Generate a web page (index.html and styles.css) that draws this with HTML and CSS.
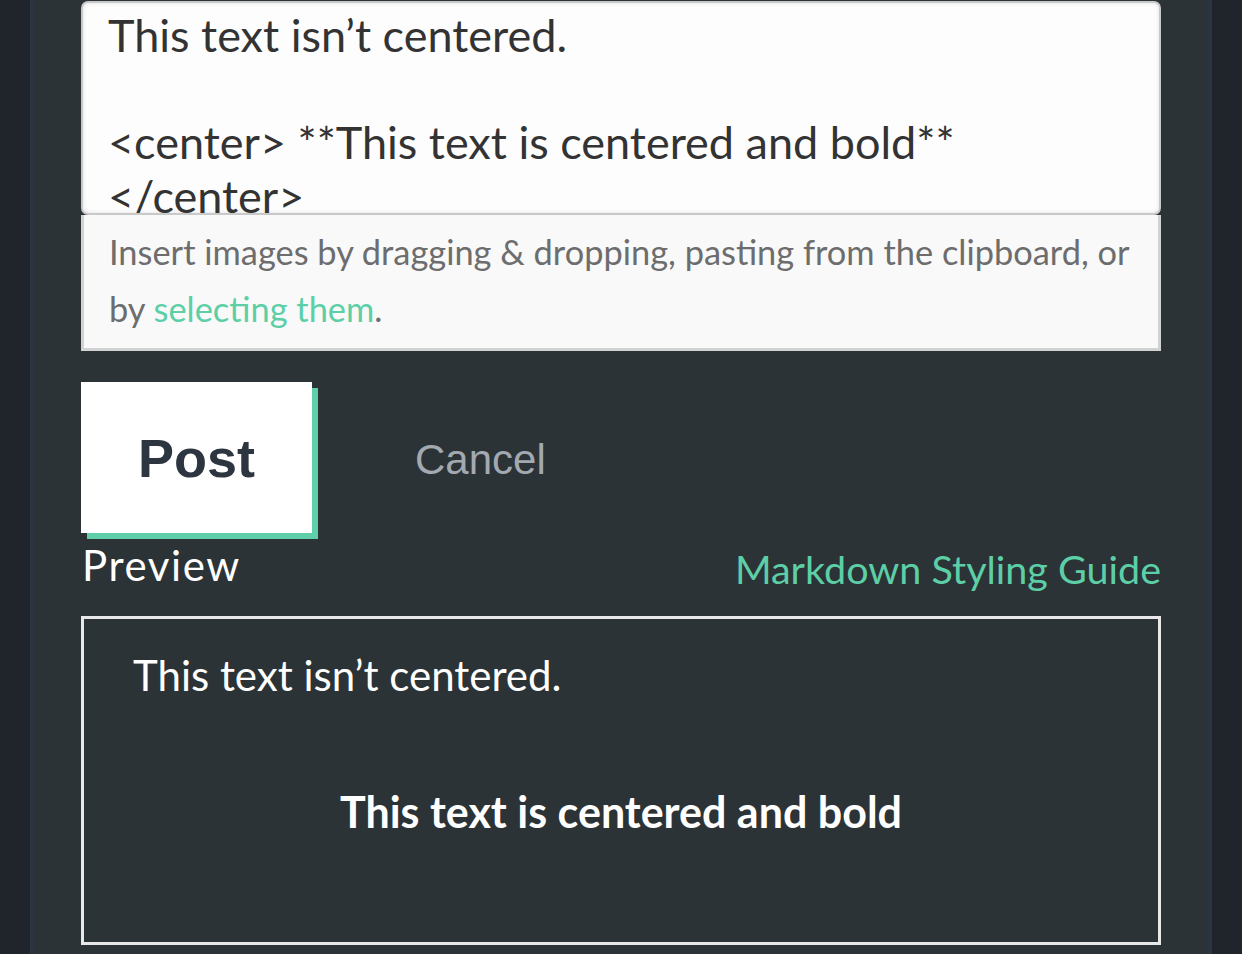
FILE: index.html
```html
<!DOCTYPE html>
<html>
<head>
<meta charset="utf-8">
<link rel="stylesheet" href="styles.css">
</head>
<body>
<div class="panel">
  <div class="editor">This text isn’t centered.

&lt;center&gt; **This text is centered and bold**
&lt;/center&gt;</div>
  <div class="hint">Insert images by dragging &amp; dropping, pasting from the clipboard, or by <a class="link" href="#">selecting them</a>.</div>
  <div class="actions">
    <button class="btn-post">Post</button>
    <button class="btn-cancel">Cancel</button>
  </div>
  <div class="preview-head">
    <div class="preview-title">Preview</div>
    <a class="guide" href="#">Markdown Styling Guide</a>
  </div>
  <div class="preview">
    <p class="p-plain">This text isn’t centered.</p>
    <p class="p-center">This text is centered and bold</p>
  </div>
</div>
</body>
</html>
```

FILE: styles.css
```css
html, body {
  margin: 0;
  padding: 0;
  background: #1f252b;
  height: 954px;
  overflow: hidden;
}

.panel {
  margin-left: 30px;
  width: 1182px;
  height: 954px;
  box-sizing: border-box;
  border-left: 3px solid #2b3541;
  border-right: 4px solid #2b3541;
  background: #2c3336;
  padding: 1px 47px 0 48px;
  font-family: Lato, "Open Sans", sans-serif;
}

.editor {
  height: 214px;
  box-sizing: border-box;
  background: #fdfdfd;
  border: 2px solid #c9c9c9;
  border-radius: 7px;
  box-shadow: inset 0 0 4px rgba(0,0,0,0.12);
  padding: 6px 26px 0 25px;
  font-size: 45px;
  line-height: 53.5px;
  color: #333333;
  white-space: pre-wrap;
  overflow: hidden;
}

.hint {
  height: 136px;
  box-sizing: border-box;
  background: #f9f9f9;
  border: 3px solid #d2d2d2;
  border-top: 0;
  padding: 8px 2px 0 25px;
  font-size: 34.4px;
  line-height: 57px;
  color: #6d6d6d;
}

.link {
  color: #5ccfa7;
  text-decoration: none;
}

.actions {
  display: flex;
  align-items: center;
  margin-top: 31px;
}

.btn-post {
  width: 231px;
  height: 151px;
  border: 0;
  background: #ffffff;
  box-shadow: 6px 6px 0 #5fcfaa;
  font-family: "Liberation Sans", Arial, sans-serif;
  font-weight: bold;
  font-size: 54px;
  color: #2c3540;
  padding: 0;
  margin: 0;
}

.btn-cancel {
  border: 0;
  background: transparent;
  margin-left: 103px;
  padding: 4px 0 0 0;
  font-family: "Liberation Sans", Arial, sans-serif;
  font-size: 42px;
  color: #a3a9b0;
}

.preview-head {
  display: flex;
  justify-content: space-between;
  align-items: baseline;
  margin-top: 6px;
}

.preview-title {
  font-size: 42px;
  letter-spacing: 1.6px;
  color: #ffffff;
  line-height: 52px;
  padding-left: 1px;
}

.guide {
  font-size: 39.5px;
  color: #5ccfa7;
  text-decoration: none;
  position: relative;
  top: 3px;
}

.preview {
  margin-top: 25px;
  height: 329px;
  box-sizing: border-box;
  border: 3px solid #e8e8e8;
}

.p-plain {
  margin: 0;
  padding: 30px 0 0 49px;
  font-size: 42px;
  line-height: 52px;
  color: #ffffff;
}

.p-center {
  margin: 85px 0 0 0;
  text-align: center;
  font-size: 43px;
  font-weight: bold;
  line-height: 52px;
  color: #ffffff;
}
```
